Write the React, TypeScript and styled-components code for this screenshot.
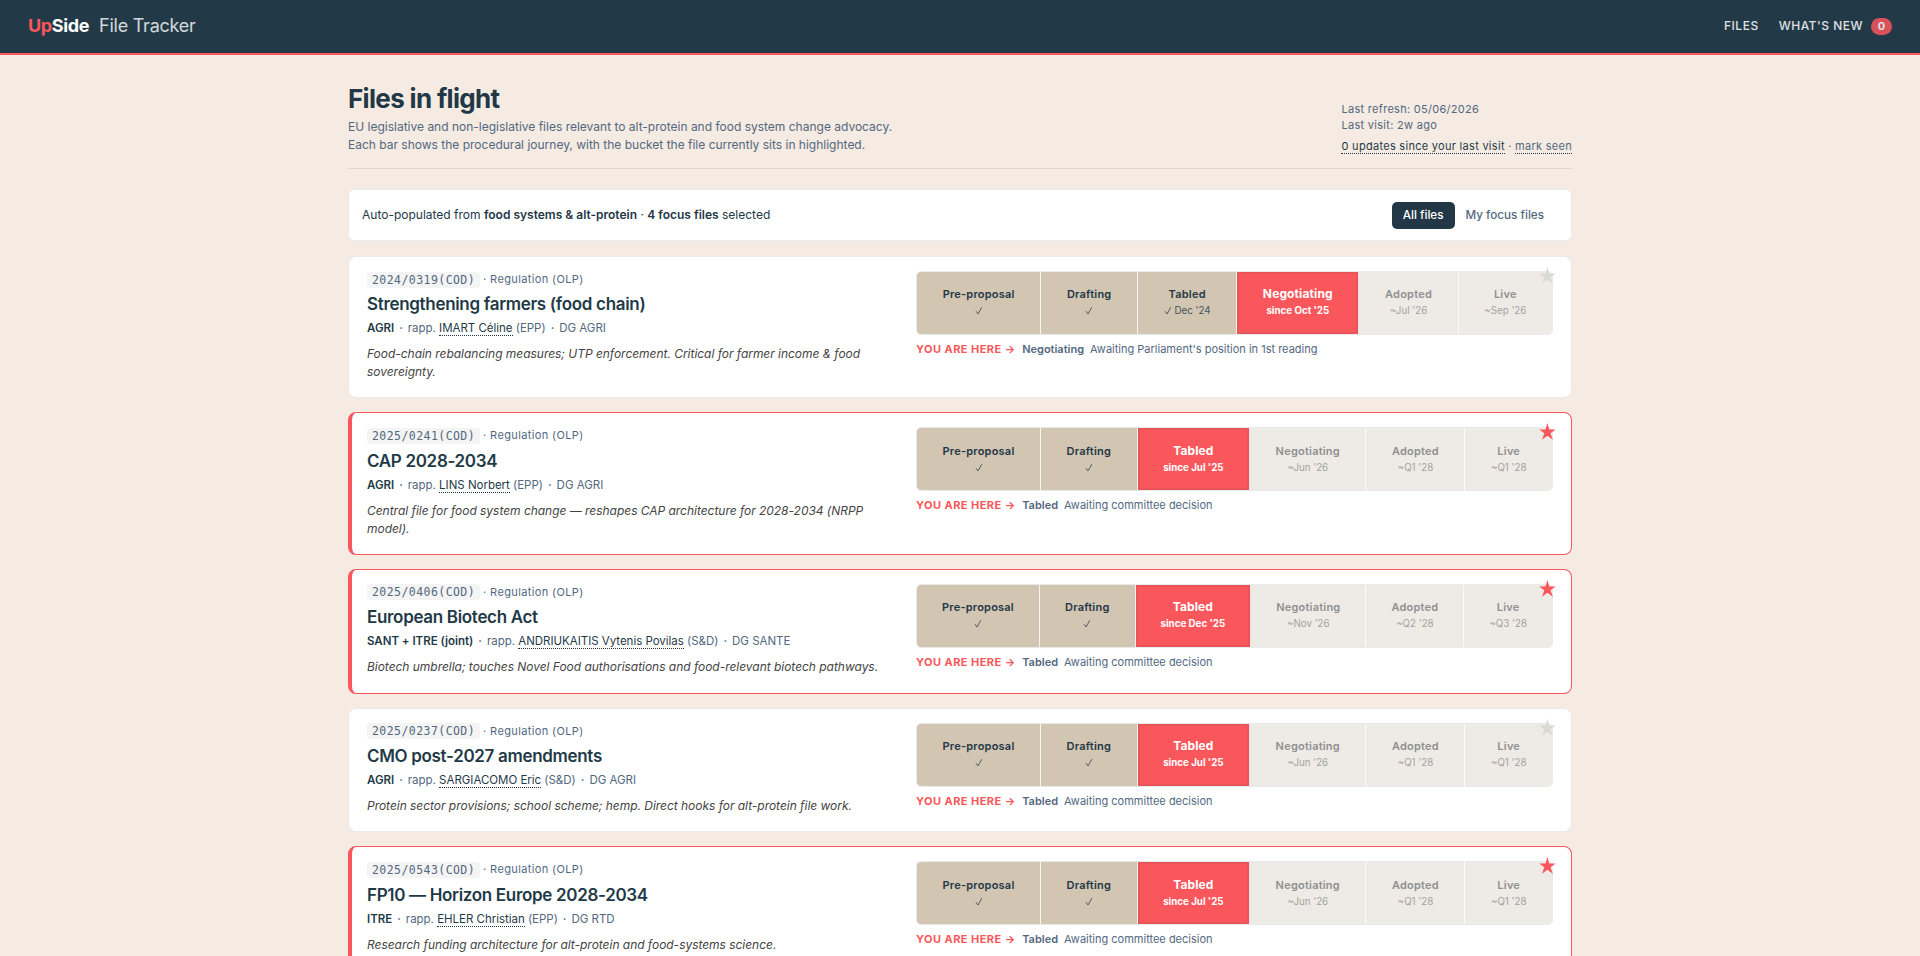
import React from "react";
import styled, { createGlobalStyle, css } from "styled-components";

const c = {
  navy: "#233847",
  bar: "#223a48",
  ink: "#1f3a47",
  slate: "#53687f",
  red: "#fa575d",
  sand: "#f5ebe2",
  tan: "#d2c5b1",
};

const Global = createGlobalStyle`
  * { box-sizing: border-box; }
  html, body { margin: 0; padding: 0; }
  body {
    background: ${c.sand};
    color: ${c.navy};
    font-family: Inter, "Liberation Sans", sans-serif;
    font-size: 14px;
    line-height: 1.5;
    height: 956px;
    overflow: hidden;
    -webkit-font-smoothing: antialiased;
  }
`;

const Header = styled.header`
  display: flex;
  align-items: center;
  justify-content: space-between;
  height: 55px;
  padding: 0 28px;
  background: ${c.bar};
  border-bottom: 2px solid ${c.red};
  color: #fff;
`;
const Brand = styled.div`
  display: flex;
  align-items: baseline;
  gap: 10px;
  font-size: 18px;
  line-height: 27px;
  letter-spacing: -0.36px;
  margin-top: -2px;
`;
const Logo = styled.span`
  font-weight: 700;
  em { font-style: normal; color: ${c.red}; }
`;
const Product = styled.span`
  font-weight: 400;
  letter-spacing: -0.25px;
  opacity: 0.8;
`;
const Nav = styled.nav`
  display: flex;
  align-items: center;
  gap: 20px;
  margin-top: -1px;
`;
const NavLink = styled.a`
  display: flex;
  align-items: center;
  gap: 8px;
  font-size: 12px;
  font-weight: 500;
  letter-spacing: 0.5px;
  text-transform: uppercase;
  opacity: 0.85;
`;
const Badge = styled.span`
  display: inline-flex;
  align-items: center;
  justify-content: center;
  width: 21px;
  height: 17px;
  border-radius: 9px;
  background: ${c.red};
  font-size: 11px;
  font-weight: 700;
  letter-spacing: 0;
`;

const Main = styled.main`
  width: 1280px;
  margin: 0 auto;
  padding: 28px 28px 0;
`;
const PageHead = styled.div`
  display: flex;
  align-items: flex-end;
  justify-content: space-between;
  height: 86px;
  padding-bottom: 14px;
  border-bottom: 1px solid #ded6ce;
  margin-bottom: 20px;
`;
const Title = styled.h1`
  margin: 0 0 4px;
  font-size: 26px;
  line-height: 31px;
  font-weight: 700;
  letter-spacing: -0.67px;
`;
const Lede = styled.p`
  margin: 0;
  font-size: 12px;
  line-height: 18px;
  color: ${c.slate};
`;
const Status = styled.div`
  font-size: 11px;
  line-height: 16px;
  letter-spacing: 0.29px;
  color: ${c.slate};
`;
const Updates = styled.div`
  margin-top: 5px;
`;
const Dotted = styled.a<{ $dark?: boolean }>`
  color: ${(p) => (p.$dark ? c.ink : "inherit")};
  border-bottom: 1px dotted ${c.navy};
`;

const Panel = styled.section`
  background: #fff;
  border: 1px solid #e8eaec;
`;
const Toolbar = styled(Panel)`
  display: flex;
  align-items: center;
  justify-content: space-between;
  height: 52px;
  padding: 0 16px 0 13px;
  border-radius: 6px;
  margin-bottom: 15px;
  font-size: 12px;
  b { font-weight: 600; }
`;
const Tabs = styled.div`
  display: flex;
`;
const Tab = styled.button<{ $on?: boolean }>`
  height: 27px;
  padding: 0 11px;
  border: 0;
  border-radius: 5px;
  font: 500 11.7px/27px Inter, sans-serif;
  background: ${(p) => (p.$on ? c.navy : "transparent")};
  color: ${(p) => (p.$on ? "#fff" : c.slate)};
`;

const Card = styled(Panel)<{ $focus: boolean }>`
  position: relative;
  display: grid;
  grid-template-columns: 529px 1fr;
  gap: 20px;
  padding: 14px 18px 16.58px;
  border-radius: 8px;
  margin-bottom: 14px;
  ${(p) =>
    p.$focus &&
    css`
      border-color: ${c.red};
      border-left-width: 4px;
      padding-left: 15px;
    `}
`;
const Info = styled.div`
  min-width: 0;
`;
const Reference = styled.div`
  display: flex;
  align-items: center;
  gap: 3px;
  height: 17px;
  font-size: 11px;
  line-height: 17px;
  letter-spacing: 0.37px;
  color: ${c.slate};
  margin-bottom: 5.2px;
`;
const Code = styled.code`
  height: 16px;
  line-height: 16px;
  padding: 0 5px;
  border-radius: 3px;
  background: #f4f4f4;
  font-family: "DejaVu Sans Mono", monospace;
  font-size: 11.5px;
  letter-spacing: 0.44px;
`;
const Name = styled.h2`
  margin: 0 0 4px;
  font-size: 17px;
  line-height: 22px;
  font-weight: 600;
  letter-spacing: -0.32px;
  color: ${c.ink};
`;
const Meta = styled.div`
  font-size: 11.5px;
  line-height: 18px;
  letter-spacing: -0.02px;
  color: ${c.slate};
  margin-bottom: 8.3px;
  b { font-weight: 600; color: ${c.ink}; }
`;
const Sep = styled.span`
  margin: 0 5px;
  font-weight: 600;
`;
const Note = styled.p`
  margin: 0;
  font-size: 12px;
  line-height: 17.7px;
  letter-spacing: -0.03px;
  font-style: italic;
  color: #444;
`;
const Star = styled.span<{ $on: boolean }>`
  position: absolute;
  top: 10px;
  right: 15px;
  width: 17px;
  height: 17px;
  color: ${(p) => (p.$on ? c.red : "#d9d9d6")};
  svg { display: block; }
`;
const Journey = styled.div`
  min-width: 0;
`;
const Track = styled.div`
  display: flex;
  height: 64px;
  border: 1px solid #e8eaec;
  border-radius: 5px;
  overflow: hidden;
`;
const Stage = styled.div<{ $state: "done" | "now" | "next" }>`
  flex: 1 1 auto;
  display: flex;
  flex-direction: column;
  align-items: center;
  justify-content: center;
  text-align: center;
  padding-bottom: 1.5px;
  font-size: 11px;
  line-height: 16px;
  font-weight: 600;
  letter-spacing: 0.22px;
  border-right: 1px solid rgba(255, 255, 255, 0.8);
  &:last-child { border-right: 0; }
  ${(p) => p.$state === "done" && css`background: ${c.tan}; color: ${c.navy};`}
  ${(p) => p.$state === "next" && css`background: #eeebe6; color: #8f9090;`}
  ${(p) =>
    p.$state === "now" &&
    css`
      background: ${c.red};
      color: #fff;
      font-size: 12px;
      font-weight: 700;
      letter-spacing: 0.12px;
      box-shadow: inset 0 0 0 2px rgba(35, 56, 71, 0.08);
    `}
`;
const When = styled.span<{ $now: boolean }>`
  font-size: 9.75px;
  line-height: 15px;
  margin-top: 1px;
  letter-spacing: 0;
  font-weight: ${(p) => (p.$now ? 700 : 400)};
  opacity: ${(p) => (p.$now ? 1 : 0.8)};
`;
const Here = styled.div`
  display: flex;
  margin-top: 6px;
  font-size: 11px;
  line-height: 17px;
  color: ${c.slate};
  b { font-weight: 600; margin-right: 6px; }
`;
const Marker = styled.span`
  color: ${c.red};
  font-weight: 700;
  letter-spacing: 0.45px;
  margin-right: 6.5px;
`;
const Check = styled.svg`
  display: inline-block;
  width: 8px;
  height: 9px;
  vertical-align: -1px;
`;

const STAGES = ["Pre-proposal", "Drafting", "Tabled", "Negotiating", "Adopted", "Live"];

type FileItem = {
  code: string;
  name: string;
  committee: string;
  rapp: string;
  group: string;
  dg: string;
  note: string;
  current: number;
  dates: string[];
  status: string;
  focus: boolean;
};

const FILES: FileItem[] = [
  {
    code: "2024/0319(COD)", name: "Strengthening farmers (food chain)", committee: "AGRI",
    rapp: "IMART Céline", group: "EPP", dg: "DG AGRI",
    note: "Food-chain rebalancing measures; UTP enforcement. Critical for farmer income & food sovereignty.",
    current: 3, dates: ["", "", "Dec '24", "since Oct '25", "~Jul '26", "~Sep '26"],
    status: "Awaiting Parliament's position in 1st reading", focus: false,
  },
  {
    code: "2025/0241(COD)", name: "CAP 2028-2034", committee: "AGRI",
    rapp: "LINS Norbert", group: "EPP", dg: "DG AGRI",
    note: "Central file for food system change — reshapes CAP architecture for 2028-2034 (NRPP model).",
    current: 2, dates: ["", "", "since Jul '25", "~Jun '26", "~Q1 '28", "~Q1 '28"],
    status: "Awaiting committee decision", focus: true,
  },
  {
    code: "2025/0406(COD)", name: "European Biotech Act", committee: "SANT + ITRE (joint)",
    rapp: "ANDRIUKAITIS Vytenis Povilas", group: "S&D", dg: "DG SANTE",
    note: "Biotech umbrella; touches Novel Food authorisations and food-relevant biotech pathways.",
    current: 2, dates: ["", "", "since Dec '25", "~Nov '26", "~Q2 '28", "~Q3 '28"],
    status: "Awaiting committee decision", focus: true,
  },
  {
    code: "2025/0237(COD)", name: "CMO post-2027 amendments", committee: "AGRI",
    rapp: "SARGIACOMO Eric", group: "S&D", dg: "DG AGRI",
    note: "Protein sector provisions; school scheme; hemp. Direct hooks for alt-protein file work.",
    current: 2, dates: ["", "", "since Jul '25", "~Jun '26", "~Q1 '28", "~Q1 '28"],
    status: "Awaiting committee decision", focus: false,
  },
  {
    code: "2025/0543(COD)", name: "FP10 — Horizon Europe 2028-2034", committee: "ITRE",
    rapp: "EHLER Christian", group: "EPP", dg: "DG RTD",
    note: "Research funding architecture for alt-protein and food-systems science.",
    current: 2, dates: ["", "", "since Jul '25", "~Jun '26", "~Q1 '28", "~Q1 '28"],
    status: "Awaiting committee decision", focus: true,
  },
];

function FileCard({ file }: { file: FileItem }) {
  return (
    <Card $focus={file.focus}>
      <Info>
        <Reference><Code>{file.code}</Code><span>· Regulation (OLP)</span></Reference>
        <Name>{file.name}</Name>
        <Meta>
          <b>{file.committee}</b><Sep>·</Sep>rapp. <Dotted $dark>{file.rapp}</Dotted> ({file.group})<Sep>·</Sep>{file.dg}
        </Meta>
        <Note>{file.note}</Note>
      </Info>
      <Journey>
        <Track>
          {STAGES.map((stage, i) => (
            <Stage key={stage} $state={i < file.current ? "done" : i === file.current ? "now" : "next"}>
              {stage}
              <When $now={i === file.current}>
                {i < file.current && (
                  <Check viewBox="0 0 8 9" fill="none" stroke="currentColor" strokeWidth="0.9">
                    <path d="M1 5.2 3 8 6.8 1.2" />
                  </Check>
                )}
                {i < file.current && file.dates[i] ? " " : ""}
                {file.dates[i]}
              </When>
            </Stage>
          ))}
        </Track>
        <Here>
          <Marker>YOU ARE HERE →</Marker>
          <b>{STAGES[file.current]}</b>
          {file.status}
        </Here>
      </Journey>
      <Star $on={file.focus}>
        <svg width="17" height="17" viewBox="0 0 17 17" fill="currentColor">
          <path d="M8.4 0 10.3 6.4H16.6L11.5 10.2 13.8 16.7 8.4 12.7 3 16.7 5.3 10.2 0.2 6.4H6.5Z" />
        </svg>
      </Star>
    </Card>
  );
}

export default function App() {
  return (
    <>
      <Global />
      <Header>
        <Brand>
          <Logo><em>Up</em>Side</Logo>
          <Product>File Tracker</Product>
        </Brand>
        <Nav>
          <NavLink>Files</NavLink>
          <NavLink>What's new <Badge>0</Badge></NavLink>
        </Nav>
      </Header>
      <Main>
        <PageHead>
          <div>
            <Title>Files in flight</Title>
            <Lede>
              EU legislative and non-legislative files relevant to alt-protein and food system change advocacy.
              <br />
              Each bar shows the procedural journey, with the bucket the file currently sits in highlighted.
            </Lede>
          </div>
          <Status>
            <div>Last refresh: 05/06/2026</div>
            <div>Last visit: 2w ago</div>
            <Updates>
              <Dotted $dark>0 updates since your last visit</Dotted> · <Dotted>mark seen</Dotted>
            </Updates>
          </Status>
        </PageHead>
        <Toolbar>
          <span>Auto-populated from <b>food systems &amp; alt-protein</b> · <b>4 focus files</b> selected</span>
          <Tabs>
            <Tab $on>All files</Tab>
            <Tab>My focus files</Tab>
          </Tabs>
        </Toolbar>
        {FILES.map((f) => <FileCard key={f.code} file={f} />)}
      </Main>
    </>
  );
}
